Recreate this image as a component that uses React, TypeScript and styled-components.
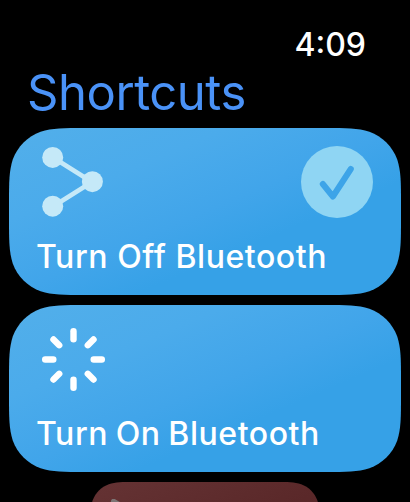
import React from "react";
import styled, { createGlobalStyle } from "styled-components";

const GlobalStyle = createGlobalStyle`
  body {
    margin: 0;
    background: #000;
    overflow: hidden;
  }
`;

// Continuous-corner rounded rectangle, as a CSS path.
function squircle(w: number, h: number, r: number): string {
  const corner = [
    [1.52866, 0], [1.08849, 0], [0.86841, 0], [0.63149, 0.07491],
    [0.37282, 0.16906], [0.16906, 0.37282], [0.07491, 0.63149],
    [0, 0.86841], [0, 1.08849], [0, 1.52866],
  ].map(([x, y]) => [x * r, y * r]);
  const trace = (pts: number[][]) => {
    const s = pts.map(([x, y]) => `${x.toFixed(2)} ${y.toFixed(2)}`);
    return `${s[0]} C${s.slice(1).join(" ")}`;
  };
  const back = [...corner].reverse();
  return (
    `M${trace(corner.map(([x, y]) => [w - x, y]))} ` +
    `L${trace(back.map(([x, y]) => [w - x, h - y]))} ` +
    `L${trace(corner.map(([x, y]) => [x, h - y]))} ` +
    `L${trace(back)} Z`
  );
}

const Watch = styled.main`
  box-sizing: border-box;
  width: 410px;
  height: 502px;
  overflow: hidden;
  display: flex;
  flex-direction: column;
  background: #000;
  font-family: Inter, "Liberation Sans", sans-serif;
`;

const StatusBar = styled.div`
  display: flex;
  flex: none;
  justify-content: flex-end;
  height: 64px;
  box-sizing: border-box;
  padding: 25px 44px 0 0;
`;

const Clock = styled.time`
  color: #fff;
  font-size: 32px;
  line-height: 40px;
  font-weight: 500;
  font-feature-settings: "case" 1;
`;

const Title = styled.h1`
  flex: none;
  margin: 0;
  height: 64px;
  padding-left: 27px;
  color: #4a92f7;
  font-size: 49px;
  line-height: 58px;
  font-weight: 400;
  letter-spacing: -0.45px;
  white-space: nowrap;
`;

const List = styled.div`
  display: flex;
  flex: none;
  flex-direction: column;
  align-items: center;
  gap: 10px;
`;

const Card = styled.section`
  box-sizing: border-box;
  width: 392px;
  height: 167px;
  flex: none;
  display: flex;
  flex-direction: column;
  justify-content: space-between;
  padding: 18px 28px 16px;
  background: linear-gradient(157deg, #52afea 0%, #4babeb 28%, #41a5ea 50%, #36a1e7 66%, #36a1e7 100%);
  clip-path: path("${squircle(392, 167, 50)}");
`;

const PeekCard = styled.section`
  box-sizing: border-box;
  width: 229px;
  height: 98px;
  flex: none;
  padding: 17px 18px;
  background: linear-gradient(157deg, #653334, #592728 60%);
  clip-path: path("${squircle(229, 98, 29)}");
`;

const CardTop = styled.div`
  display: flex;
  justify-content: space-between;
  height: 72px;
`;

const Label = styled.span<{ $wordSpacing: number }>`
  margin-left: -1px;
  color: #fff;
  font-size: 32px;
  line-height: 45px;
  font-weight: 500;
  letter-spacing: 0.56px;
  word-spacing: ${(p) => p.$wordSpacing}px;
  white-space: nowrap;
`;

const Glyph = styled.svg`
  display: block;
  flex: none;
`;

const ShareIcon = () => (
  <Glyph width="72" height="72" viewBox="0 0 72 72">
    <g fill="#c5e9f8" stroke="#c5e9f8">
      <path d="M16 11.5 55 36 16 60.5" fill="none" strokeWidth="4.6" />
      <g stroke="none">
        <circle cx="15.7" cy="11.4" r="10.5" />
        <circle cx="55.4" cy="35.7" r="10.5" />
        <circle cx="15.7" cy="60.2" r="10.5" />
      </g>
    </g>
  </Glyph>
);

const DoneIcon = () => (
  <Glyph width="72" height="72" viewBox="0 0 72 72">
    <circle cx="36" cy="36" r="36" fill="#8fd5f3" />
    <path
      d="M21.8 38 31.9 50.5 49.8 23"
      fill="none"
      stroke="#3da4e8"
      strokeWidth="6"
      strokeLinecap="round"
      strokeLinejoin="round"
    />
  </Glyph>
);

const SpinnerIcon = () => (
  <Glyph width="72" height="72" viewBox="0 0 72 72">
    <g stroke="#fff" strokeWidth="6.4" strokeLinecap="round">
      {[0, 45, 90, 135, 180, 225, 270, 315].map((a) => (
        <path key={a} d="M36.5 8.2V16.3" transform={`rotate(${a} 36.5 36.5)`} />
      ))}
    </g>
  </Glyph>
);

const PeekIcon = () => (
  <Glyph width="24" height="24" viewBox="0 0 24 24">
    <path d="M4.5 2.2 16 9" stroke="#7c7474" strokeWidth="5" strokeLinecap="round" />
  </Glyph>
);

export default function App() {
  return (
    <Watch>
      <GlobalStyle />
      <StatusBar>
        <Clock>4:09</Clock>
      </StatusBar>
      <Title>Shortcuts</Title>
      <List>
        <Card>
          <CardTop>
            <ShareIcon />
            <DoneIcon />
          </CardTop>
          <Label $wordSpacing={0}>Turn Off Bluetooth</Label>
        </Card>
        <Card>
          <CardTop>
            <SpinnerIcon />
          </CardTop>
          <Label $wordSpacing={-1.4}>Turn On Bluetooth</Label>
        </Card>
        <PeekCard>
          <PeekIcon />
        </PeekCard>
      </List>
    </Watch>
  );
}
